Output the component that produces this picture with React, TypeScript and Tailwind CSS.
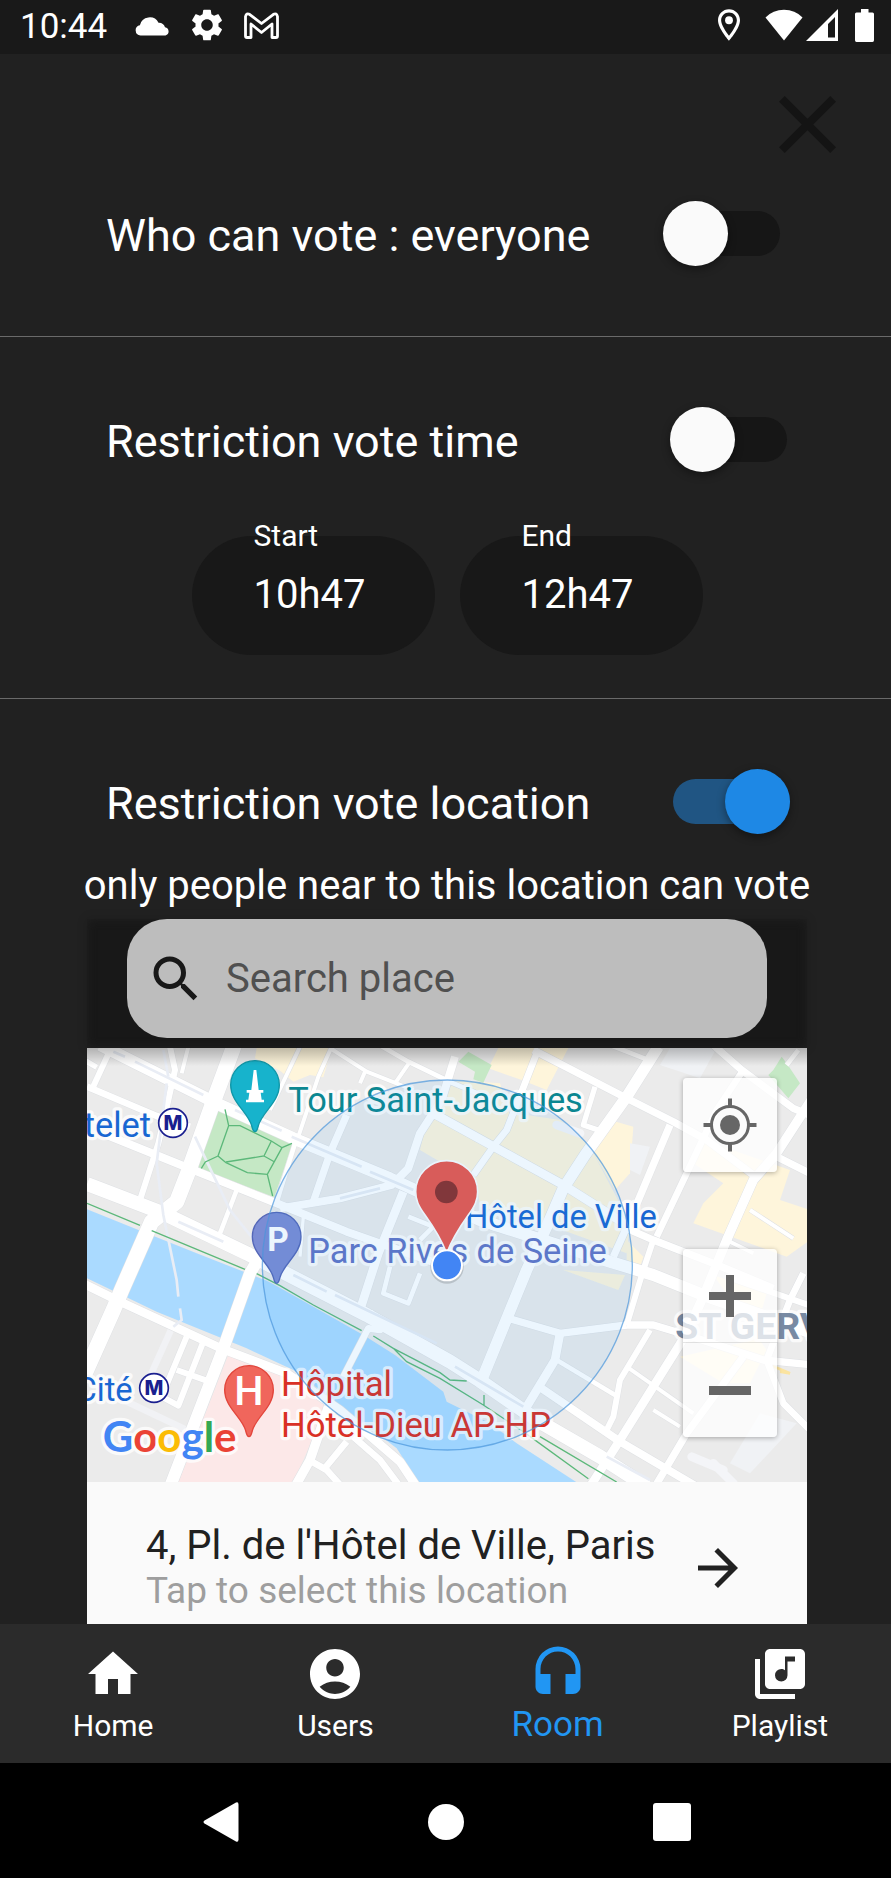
import { useState } from "react";
import type { ReactNode } from "react";
import {
  MdAccountCircle,
  MdArrowForward,
  MdHeadset,
  MdHome,
  MdLibraryMusic,
  MdSearch,
} from "react-icons/md";

const GREY = "#ebebeb";

function StatusBar() {
  return (
    <div className="flex h-[54px] items-center justify-between bg-[#191919] pr-[17px] pl-5 text-white">
      <div className="flex items-center gap-[21px]">
        <span className="mr-[7px] text-[35px] leading-[50px]">10:44</span>
        <svg className="h-5 w-[35px]" viewBox="0 1 35 20" fill="currentColor" aria-hidden="true">
          <path d="M5.500 19.500A5.200 5.200 0 0 1 4.900 9.200A10 10 0 0 1 23.500 6.700A6.500 6.500 0 0 1 30 11.300A4.200 4.200 0 0 1 30.500 19.500Z" />
        </svg>
        <svg className="mb-1 size-8" viewBox="2 2 20 20" fill="currentColor" aria-hidden="true">
          <path d="M19.140 12.940c.04-.3.06-.61.06-.94 0-.32-.02-.64-.07-.94l2.030-1.580c.18-.14.23-.41.12-.61l-1.920-3.320c-.12-.22-.37-.29-.59-.22l-2.390.96c-.5-.38-1.030-.7-1.620-.94l-.36-2.540c-.04-.24-.24-.41-.48-.41h-3.840c-.24 0-.43.17-.47.41l-.36 2.540c-.59.24-1.130.57-1.620.94l-2.390-.96c-.22-.08-.47 0-.59.22L2.740 8.870c-.12.21-.08.47.12.61l2.030 1.580c-.05.3-.09.63-.09.94s.02.64.07.94l-2.030 1.580c-.18.14-.23.41-.12.61l1.920 3.320c.12.22.37.29.59.22l2.390-.96c.5.38 1.030.7 1.620.94l.36 2.540c.05.24.24.41.48.41h3.840c.24 0 .44-.17.47-.41l.36-2.540c.59-.24 1.130-.56 1.620-.94l2.390.96c.22.08.47 0 .59-.22l1.920-3.320c.12-.22.07-.47-.12-.61l-2.010-1.580zM12 15.600c-1.980 0-3.600-1.620-3.600-3.600s1.620-3.600 3.600-3.600 3.600 1.620 3.600 3.600-1.620 3.600-3.600 3.600z" />
        </svg>
        <svg className="mb-1 h-[27px] w-[35px]" viewBox="0 0 35 27" fill="none" stroke="currentColor" strokeWidth="2.800" strokeLinejoin="round" aria-hidden="true">
          <path d="M1.500 4.500V24Q1.500 25.500 3 25.500H7V12L17.500 20.500L28 12V25.500H32Q33.500 25.500 33.500 24V4.500Q32.500 .8 29.500 2.300L17.500 11.500L5.500 2.300Q2.500 .8 1.500 4.500Z" />
        </svg>
      </div>
      <div className="mb-1 flex items-center">
        <svg className="h-8 w-[22px]" viewBox="5 2 14 20" fill="currentColor" aria-hidden="true">
          <path d="M12 2C8.130 2 5 5.130 5 9c0 5.250 7 13 7 13s7-7.750 7-13c0-3.870-3.130-7-7-7zM7 9c0-2.760 2.240-5 5-5s5 2.240 5 5c0 2.880-2.880 7.190-5 9.880C9.920 16.210 7 11.850 7 9z" />
          <circle cx="12" cy="9" r="2.500" />
        </svg>
        <svg className="ml-[25px] h-8 w-[38px]" viewBox="0 0 38 32" fill="currentColor" aria-hidden="true">
          <path d="M19 31.500L.5 8.500Q8 .8 19 .8T37.500 8.500Z" />
        </svg>
        <svg className="ml-[3px] size-8" viewBox="0 0 32 32" fill="currentColor" aria-hidden="true">
          <path fillRule="evenodd" d="M32 0V32H0ZM29 8L22 15V28.500H29Z" />
        </svg>
        <svg className="ml-[17px] h-[33px] w-[19px]" viewBox="0 0 19 33" fill="currentColor" aria-hidden="true">
          <path d="M6 0H13.500V3.500H17.500Q19 3.500 19 5V31.300Q19 33 17.500 33H1.500Q0 33 0 31.300V5Q0 3.500 1.500 3.500H6Z" />
        </svg>
      </div>
    </div>
  );
}

function SwitchRow({ id, label, pad, initial }: { id: string; label: string; pad: string; initial: boolean }) {
  const [on, setOn] = useState(initial);
  return (
    <div className={`flex h-[65px] items-center justify-between pl-[106px] ${pad}`}>
      <label htmlFor={id} className="pt-[4px] text-[45px] leading-[56px] text-white">
        {label}
      </label>
      <input
        id={id}
        type="checkbox"
        role="switch"
        checked={on}
        onChange={(e) => setOn(e.target.checked)}
        className="relative h-[65px] w-[117px] shrink-0 appearance-none before:absolute before:inset-x-0 before:top-[10px] before:h-[45px] before:rounded-full before:bg-[#161616] after:absolute after:top-0 after:left-0 after:size-[65px] after:rounded-full after:bg-[#fafafa] after:shadow-[0_3px_8px_rgba(0,0,0,0.4)] checked:before:bg-[#205583] checked:after:left-[52px] checked:after:bg-[#1e88e5]"
      />
    </div>
  );
}

function TimeField({ id, label, value }: { id: string; label: string; value: string }) {
  return (
    <div className="relative h-[119px] w-[243px] rounded-full bg-[#181818]">
      <label htmlFor={id} className="absolute -top-[18px] left-[62px] text-[30px] leading-[36px] text-white">
        {label}
      </label>
      <input
        id={id}
        type="text"
        defaultValue={value}
        className="h-full w-full bg-transparent pb-[2px] pl-[62px] text-[40px] text-white outline-none"
      />
    </div>
  );
}

type Road = [string, number];

const ROADS: Road[] = [
  ["M60 15L170 70L420 195L640 295L930 415L1200 540L1590 665L1720 705L1870 765L2200 880", 36],
  ["M21 140L230 228L330 260", 20],
  ["M80 285L340 390L590 490L800 575L1100 680", 24],
  ["M21 432L250 520L500 640L620 702L860 825L1110 965L1200 1022L1370 1140L1560 1250L1700 1340", 42],
  ["M465 10L400 185L325 395L290 485L215 545L125 750L100 810L15 1000", 46],
  ["M270 20L285 90L265 180L235 310L180 480", 18],
  ["M95 20L35 150", 18],
  ["M10 58L50 82", 16],
  ["M325 20L305 100", 12],
  ["M660 20L570 210", 12],
  ["M755 20L715 110L655 290", 12],
  ["M750 24L860 95L1000 150", 12],
  ["M890 10L985 65L1115 128L1240 180", 14],
  ["M990 65L945 130M855 95L840 130", 12],
  ["M470 450L420 580", 14],
  ["M645 310L592 480", 14],
  ["M800 225L750 340L700 485", 22],
  ["M1125 50L1085 180L1020 280L985 385L935 435L780 475L600 505", 24],
  ["M970 455L895 640L840 810", 26],
  ["M670 530L660 650", 10],
  ["M985 530L1060 560L1020 600", 14],
  ["M930 680L910 760L985 790L1020 700", 14],
  ["M545 640L510 700L430 925L270 1340", 36],
  ["M15 733L120 785L430 928L620 1000L780 1110L960 1265L1010 1340", 26],
  ["M820 1190L900 1260L960 1340", 20],
  ["M745 1100L690 1260L645 1340", 28],
  ["M690 1262L740 1290L785 1340M800 1205L730 1290", 20],
  ["M320 890L245 1070L295 1097L370 905M290 990L380 1022", 18],
  ["M870 815L900 870L865 865L790 1010", 20],
  ["M1370 40L1280 270L1240 320L1180 405", 20],
  ["M1735 20L1640 170L1515 345L1450 445L1400 560L1340 690L1205 1020", 34],
  ["M1360 30L1640 175L1780 245L1880 300L2020 405", 22],
  ["M1545 140L1510 255L1570 275", 16],
  ["M1060 220L1450 435L1640 555", 26],
  ["M1770 255L1650 540L1600 650", 22],
  ["M1640 565L1720 600L1900 670L2080 745", 22],
  ["M1720 600L1690 690L1640 855", 18],
  ["M1990 90L1910 210L1730 590", 20],
  ["M1900 15L1985 90L2140 205L2200 230", 22],
  ["M2200 170L2090 340L2020 420L1940 600L1870 770L1810 900", 28],
  ["M2080 345L2200 405", 22],
  ["M2010 510L2140 595M1950 605L2020 640", 12],
  ["M2120 75L2155 30M1590 15L1710 62", 14],
  ["M1640 855L1720 855L1820 885L2050 960L2200 975", 22],
  ["M1275 832L1440 880L1640 855", 22],
  ["M1440 880L1425 960L1340 1100", 26],
  ["M1430 960L1610 1068", 14],
  ["M1710 870L1620 1020L1600 1130L1575 1180", 18],
  ["M1640 980L1840 1120", 12],
  ["M1820 880L1720 1040L1620 1200L1530 1340", 26],
  ["M1370 1035L1620 1205L1850 1340", 24],
  ["M1720 1110L1800 1160", 12],
  ["M1990 950L1820 1180L1725 1340", 22],
  ["M2170 700L2130 780L2060 960L2110 1090L2200 1180", 20],
  ["M1940 710L2200 800", 18],
];

const RAIL = [
  "M100 35L135 50M165 65L370 165M465 210L605 272M635 290L845 380M295 545L430 605M870 395L1000 450",
  "M250 30L265 110M260 130L230 370L250 525L290 720L295 770M300 805L305 840L280 860",
  "M345 290L450 510L530 610",
  "M640 705L740 755M765 765L1070 910M1125 980L1330 1100M1580 1250L1710 1320",
  "M780 475L900 445",
];

function Pin({ x, y, fill, edge, children }: { x: number; y: number; fill: string; edge: string; children?: ReactNode }) {
  return (
    <g transform={`translate(${x} ${y})`}>
      <path
        d="M0 140C-6 140 -8 130 -10 122C-20 82 -73 52 -73 0A73 73 0 0 1 73 0C73 52 20 82 10 122C8 130 6 140 0 140Z"
        fill={fill}
        stroke={edge}
        strokeWidth="4"
      />
      {children}
    </g>
  );
}

function Metro({ x, y }: { x: number; y: number }) {
  return (
    <g>
      <circle cx={x} cy={y} r="43" fill="#fff" stroke="#1a1f8f" strokeWidth="5" />
      <text
        x={x}
        y={y + 21}
        textAnchor="middle"
        fontSize="60"
        fontWeight="800"
        fill="#1a1f8f"
        className="font-[Inter,sans-serif]"
      >
        M
      </text>
    </g>
  );
}

function MapDrawing() {
  return (
    <svg
      className="block h-full w-full font-[Roboto,sans-serif]"
      viewBox="21 24 2160 1302"
      preserveAspectRatio="xMidYMid slice"
      role="img"
      aria-label="Map around Hôtel de Ville, Paris"
    >
      <rect x="0" y="0" width="2220" height="1350" fill={GREY} />
      <g fill="#fef5db">
        <path d="M530 24H755L730 112L690 105L640 125L600 92L525 55Z" />
        <path d="M1255 24H1465L1400 150L1325 120L1225 85Z" />
        <path d="M1590 240L1660 260L1650 400L1605 450L1540 340Z" />
        <path d="M1870 300L2130 390L2100 480L2190 510V600L2120 650L1840 550L1870 490L1930 430L1840 370Z" />
        <path d="M1050 200L1120 120L1260 130L1290 225L1340 225L1440 240L1530 320L1650 550L1640 640L1420 560L1200 500L1190 430L1020 330Z" />
        <path d="M1450 690L1635 705L1615 750Z" />
        <path d="M1900 705L2060 760L2020 900L1800 950L1930 1030L2010 1030L2060 930Z" />
        <path d="M1640 600L1690 650L1680 680L1640 670Z" />
      </g>
      <path d="M2070 975L2130 1000L2100 995" fill="none" stroke="#fbe4a0" strokeWidth="8" />
      <g fill="#f0f2f5">
        <path d="M1770 24H1910L1860 115L1740 75Z" />
        <path d="M1650 310L1710 320L1680 405L1650 390Z" />
        <path d="M2040 1120L2150 1150L2010 1300L1950 1270Z" />
      </g>
      <path d="M445 945L620 1010L740 1100L635 1340H290Z" fill="#fce8e8" />
      <g fill="#c5e8c5">
        <path d="M418 202L638 310L583 472L350 382Z" />
        <path d="M1165 35L1235 75L1210 128L1180 118L1185 95L1135 65Z" />
        <path d="M2105 50L2120 70L2160 130L2125 175L2065 105L2080 90Z" />
      </g>
      <path
        d="M21 508L170 568L350 640L560 722L590 738L850 885L945 945L1090 1055L1100 1085L1230 1150L1310 1210L1510 1340H1025L950 1225L800 1110L640 990L500 925L230 815L21 715Z"
        fill="#aadaff"
      />
      <path d="M1070 510L1100 495L1110 520Z" fill="#8ac8fb" />

      <path d="M275 865L205 1020M130 1080L320 1170" fill="none" stroke="#f1f2f5" strokeWidth="20" />
      <path d="M1835 1250L1930 1290M1900 1270L1960 1330M1430 255L1500 280" fill="none" stroke="#f4f5f8" strokeWidth="26" strokeLinecap="round" />
      <g fill="none" strokeLinejoin="round" stroke="#dfe1e4">
        {ROADS.map(([d, w]) => (
          <path key={d} d={d} strokeWidth={w + 3} />
        ))}
      </g>
      <g fill="none" strokeLinejoin="round" stroke="#fff">
        {ROADS.map(([d, w]) => (
          <path key={d} d={d} strokeWidth={w} />
        ))}
      </g>
      <g fill="none" stroke="#e9edf5" strokeWidth="8">
        {RAIL.map((d) => (
          <path key={d} d={d} />
        ))}
      </g>
      <g fill="none" stroke="#5cb87a" strokeWidth="4">
        <path d="M435 208L446 257L414 348L438 368L502 398L562 403L606 323L574 303L480 257H446M574 303L552 348L438 366M552 348L584 366M414 348L376 366L364 385M562 403L578 468M606 323L636 310" />
        <path d="M21 490L180 556M215 572L495 688M530 701L600 737L700 795L845 872M880 888L940 925L1080 998L1110 1020L1160 1023M940 925L980 965L1080 1015L1210 1095L1330 1175L1525 1316M1212 1065V1095M1380 1190L1610 1326" />
      </g>

      <g strokeLinejoin="round" strokeWidth="20" stroke="#ffffff" strokeOpacity="0.75" style={{ paintOrder: "stroke" }}>
        <text x="213" y="290" textAnchor="end" fontSize="103" fill="#1967d2">telet</text>
        <text x="158" y="1082" textAnchor="end" fontSize="98" fill="#1967d2">Cité</text>
        <text x="625" y="215" fontSize="103" fill="#0b8791">Tour Saint-Jacques</text>
        <text x="1155" y="563" fontSize="98" fill="#1967d2">Hôtel de Ville</text>
        <text x="685" y="669" fontSize="103" fill="#6275c6">Parc Rives de Seine</text>
        <text x="603" y="1067" fontSize="104" fill="#d93025">Hôpital</text>
        <text x="603" y="1190" fontSize="104" fill="#d93025">Hôtel-Dieu AP-HP</text>
        <text x="1786" y="897" fontSize="112" fontWeight="700" fill="#788aa3">ST GERV</text>
      </g>
      <Metro x={279} y={249} />
      <Metro x={222} y={1044} />
      <Pin x={525} y={135} fill="#17b3cc" edge="#0f97a8">
        <path d="M-4 -45H4L11 15H25V23H17L20 44H27V52H-27V44H-20L-17 23H-25V15H-11Z" fill="#fff" />
      </Pin>
      <Pin x={590} y={590} fill="#7b8cd4" edge="#5467b8">
        <text x="4" y="43" textAnchor="middle" fontSize="100" fontWeight="700" fill="#fff">P</text>
      </Pin>
      <Pin x={507} y={1050} fill="#f0665c" edge="#e2453b">
        <text x="0" y="46" textAnchor="middle" fontSize="124" fontWeight="500" fill="#fff">H</text>
      </Pin>

      <circle cx="1102" cy="675" r="555" fill="rgba(33,150,243,0.085)" stroke="#4a96dc" strokeOpacity="0.7" strokeWidth="4" />

      <path
        d="M1100 640C1085 600 1060 560 1035 525C1015 497 1007 480 1007 455A93 93 0 0 1 1193 455C1193 480 1185 497 1165 525C1140 560 1115 600 1100 640Z"
        fill="#d85c5a"
        stroke="#e9f3fb"
        strokeWidth="5"
      />
      <circle cx="1099" cy="456" r="34" fill="#81373b" />
      <circle cx="1101" cy="681" r="50" fill="#000" opacity="0.15" />
      <circle cx="1101" cy="676" r="45" fill="#4285f4" stroke="#fff" strokeWidth="6" />

      <text
        x="68"
        y="1237"
        fontSize="126"
        fontWeight="700"
        className="font-[Lato,sans-serif]"
        stroke="#fff"
        strokeOpacity="0.75"
        strokeWidth="20"
        strokeLinejoin="round"
        style={{ paintOrder: "stroke" }}
      >
        <tspan fill="#4285f4">G</tspan>
        <tspan fill="#ea4335">o</tspan>
        <tspan fill="#fbbc05">o</tspan>
        <tspan fill="#4285f4">g</tspan>
        <tspan fill="#34a853">l</tspan>
        <tspan fill="#ea4335">e</tspan>
      </text>
    </svg>
  );
}

function MapPanel() {
  return (
    <div className="relative h-[434px] overflow-hidden">
      <MapDrawing />
      <div className="pointer-events-none absolute inset-x-0 top-0 h-[18px] bg-linear-to-b from-black/25 to-transparent" />
      <button
        type="button"
        aria-label="My location"
        className="absolute top-[30px] right-[30px] flex size-[94px] items-center justify-center rounded-[4px] bg-white/80 shadow-[0_1px_5px_rgba(0,0,0,0.3)]"
      >
        <svg className="size-[54px]" viewBox="0 0 54 54" fill="none" stroke="#666" aria-hidden="true">
          <circle cx="27" cy="27" r="18.500" strokeWidth="3" />
          <circle cx="27" cy="27" r="10" fill="#666" stroke="none" />
          <path d="M27 0.500V9M27 45V53.500M.5 27H9M45 27H53.500" strokeWidth="4" />
        </svg>
      </button>
      <div className="absolute top-[201px] right-[30px] flex w-[94px] flex-col divide-y divide-black/10 rounded-[4px] bg-white/75 shadow-[0_1px_5px_rgba(0,0,0,0.3)]">
        <button type="button" aria-label="Zoom in" className="flex h-[94px] items-center justify-center">
          <svg className="size-[42px]" viewBox="0 0 42 42" fill="#666" aria-hidden="true">
            <path d="M17 0H25V17H42V25H25V42H17V25H0V17H17Z" />
          </svg>
        </button>
        <button type="button" aria-label="Zoom out" className="flex h-[94px] items-center justify-center">
          <svg className="size-[42px]" viewBox="0 0 42 42" fill="#666" aria-hidden="true">
            <path d="M0 17H42V26H0Z" />
          </svg>
        </button>
      </div>
    </div>
  );
}

function NavItem({ label, icon, active }: { label: string; icon: ReactNode; active?: boolean }) {
  return (
    <a
      href={`#${label.toLowerCase()}`}
      className={`flex flex-1 flex-col items-center ${active ? "text-[35px] leading-[42px] text-[#2196f3]" : "text-[30px] leading-[44px] text-white"}`}
    >
      {icon}
      {label}
    </a>
  );
}

export default function App() {
  return (
    <div className="flex min-h-screen flex-col bg-[#212121] font-[Roboto,sans-serif]">
      <StatusBar />
      <main className="flex-1">
        <div className="flex justify-end pt-[22px] pr-[35px]">
          <button type="button" aria-label="Close" className="p-5 text-[#141414]">
            <svg className="size-[57px]" viewBox="5 5 14 14" fill="currentColor" aria-hidden="true">
              <path d="M19 6.410L17.590 5 12 10.590 6.410 5 5 6.410 10.590 12 5 17.590 6.410 19 12 13.410 17.590 19 19 17.590 13.410 12z" />
            </svg>
          </button>
        </div>
        <section className="border-b border-[#6a6a6a] pt-7 pb-[70px]">
          <SwitchRow id="who" label="Who can vote : everyone" pad="pr-[111px]" initial={false} />
        </section>
        <section className="border-b border-[#6a6a6a] pt-[70px] pb-[43px]">
          <SwitchRow id="time" label="Restriction vote time" pad="pr-[104px]" initial={false} />
          <div className="mt-[64px] mr-[84px] ml-[87px] flex justify-center gap-[25px]">
            <TimeField id="start" label="Start" value="10h47" />
            <TimeField id="end" label="End" value="12h47" />
          </div>
        </section>
        <section className="pt-[70px]">
          <SwitchRow id="location" label="Restriction vote location" pad="pr-[101px]" initial={true} />
          <div className="mt-[28px] mr-[84px] ml-[87px]">
            <div className="flex justify-center">
              <p className="shrink-0 text-[40px] leading-[48px] whitespace-nowrap text-white">
                only people near to this location can vote
              </p>
            </div>
            <div className="mt-[9px] bg-[#181818] px-10 pb-[10px] shadow-[inset_0_0_10px_#212121,0_0_10px_rgba(0,0,0,0.15)]">
              <div className="flex h-[119px] items-center rounded-[40px] bg-[#bdbdbd] pl-[19px]">
                <MdSearch className="size-[60px] shrink-0 text-[#181818]" />
                <input
                  type="search"
                  aria-label="Search place"
                  placeholder="Search place"
                  className="ml-5 h-full min-w-0 flex-1 bg-transparent text-[40px] text-black outline-none placeholder:text-[#505050]"
                />
              </div>
            </div>
            <MapPanel />
            <button
              type="button"
              className="flex h-[142px] w-full items-center justify-between bg-[#fafafa] px-[59px] pt-[30px] text-left"
            >
              <span className="flex flex-col whitespace-nowrap">
                <span className="text-[40px] leading-[46px] text-[#212121]">4, Pl. de l'Hôtel de Ville, Paris</span>
                <span className="text-[37px] leading-[44px] text-[#9e9e9e]">Tap to select this location</span>
              </span>
              <MdArrowForward className="size-[60px] shrink-0 text-[#212121]" />
            </button>
          </div>
        </section>
      </main>
      <nav className="flex bg-[#2b2b2b] pt-5 pb-[15px] pl-[2px]">
        <NavItem label="Home" icon={<MdHome className="size-[60px]" />} />
        <NavItem label="Users" icon={<MdAccountCircle className="size-[60px]" />} />
        <NavItem label="Room" icon={<MdHeadset className="size-[60px]" />} active />
        <NavItem label="Playlist" icon={<MdLibraryMusic className="size-[60px]" />} />
      </nav>
      <div className="bg-black pt-[2px] pl-[2px]">
        <div className="mx-auto grid h-[113px] w-[76%] grid-cols-3 place-items-center">
          <button type="button" aria-label="Back">
            <svg className="h-10 w-9" viewBox="0 0 36 40" fill="#fff" aria-hidden="true">
              <path d="M33 .5Q35.500 -.5 35.500 2.500V37.500Q35.500 40.500 33 39.500L1.500 21.500Q-.5 20 1.500 18.500Z" />
            </svg>
          </button>
          <button type="button" aria-label="Home screen" className="size-9 rounded-full bg-white" />
          <button type="button" aria-label="Recent apps" className="size-[38px] rounded-[3px] bg-white" />
        </div>
      </div>
    </div>
  );
}
